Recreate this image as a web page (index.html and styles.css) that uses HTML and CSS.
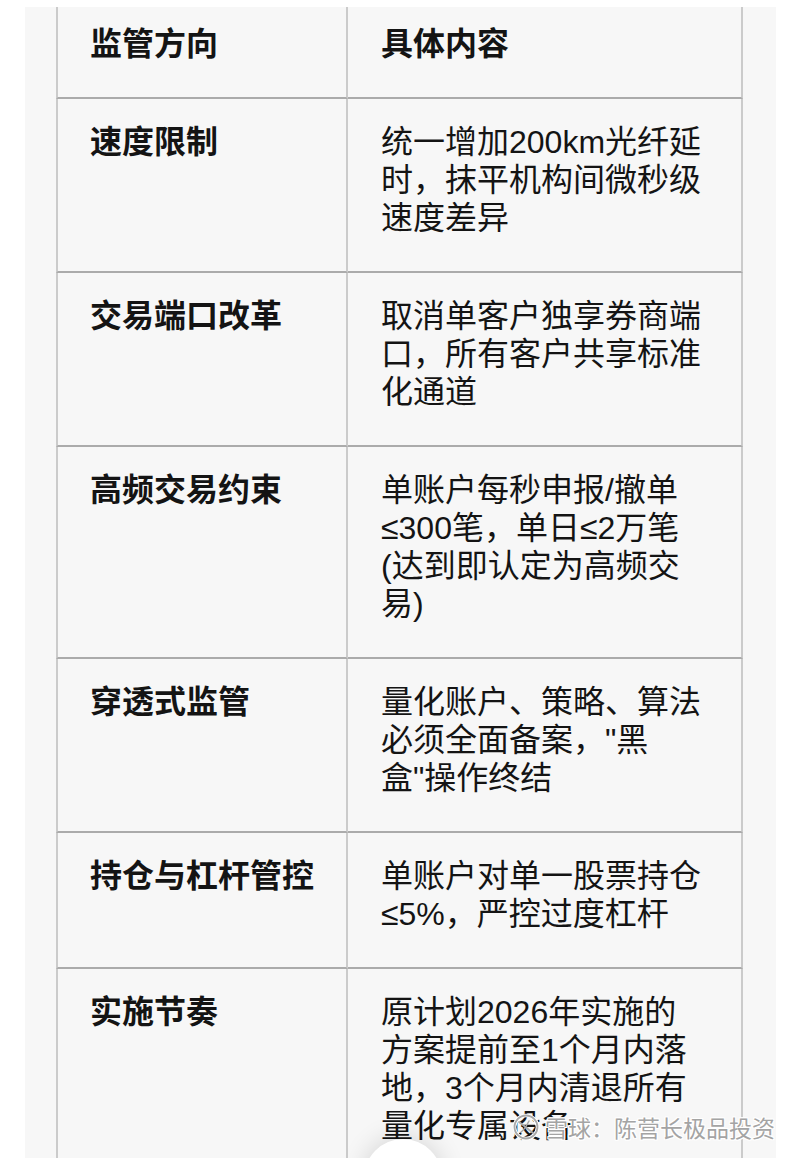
FILE: index.html
```html
<!DOCTYPE html>
<html lang="zh-CN">
<head>
<meta charset="utf-8">
<title>监管方向</title>
<link rel="stylesheet" href="styles.css">
</head>
<body>
<div class="page">
  <div class="panel">
    <div class="grid">
      <div class="cell head key">监管方向</div>
      <div class="cell head val">具体内容</div>

      <div class="cell key">速度限制</div>
      <div class="cell val">统一增加200km光纤延
时，抹平机构间微秒级
速度差异</div>

      <div class="cell key">交易端口改革</div>
      <div class="cell val">取消单客户独享券商端
口，所有客户共享标准
化通道</div>

      <div class="cell key">高频交易约束</div>
      <div class="cell val">单账户每秒申报/撤单
≤300笔，单日≤2万笔
(达到即认定为高频交
易)</div>

      <div class="cell key">穿透式监管</div>
      <div class="cell val">量化账户、策略、算法
必须全面备案，"黑
盒"操作终结</div>

      <div class="cell key">持仓与杠杆管控</div>
      <div class="cell val">单账户对单一股票持仓
≤5%，严控过度杠杆</div>

      <div class="cell key">实施节奏</div>
      <div class="cell val">原计划2026年实施的
方案提前至1个月内落
地，3个月内清退所有
量化专属设备</div>
    </div>
  </div>
  <div class="fab"></div>
  <div class="watermark">
    <svg class="wm-logo" width="28" height="28" viewBox="0 0 28 28">
      <circle cx="14" cy="14" r="11.5" fill="none" stroke="#ffffff" stroke-width="3.6"/>
      <circle cx="14" cy="14" r="11.5" fill="none" stroke="#a8a8a8" stroke-width="1.8"/>
      <path d="M7 9 C 11 12, 15 15, 21 20" fill="none" stroke="#a8a8a8" stroke-width="1.8" stroke-linecap="round"/>
      <path d="M9 19 C 12 17, 14 14, 17 8" fill="none" stroke="#a8a8a8" stroke-width="1.5" stroke-linecap="round"/>
    </svg>
    <span class="wm-text">雪球：陈营长极品投资</span>
  </div>
</div>
</body>
</html>
```

FILE: styles.css
```css
html, body {
  margin: 0;
  padding: 0;
  background: #ffffff;
}

body {
  height: 1158px;
  overflow: hidden;
  font-family: "Liberation Sans", "Noto Sans CJK SC", sans-serif;
  color: #141414;
}

.page {
  position: relative;
  height: 1158px;
  overflow: hidden;
}

.panel {
  margin: 7px 24px 0 25px;
  height: 1151px;
  background: #f7f7f7;
  padding-left: 31px;
  box-sizing: border-box;
}

.grid {
  display: grid;
  grid-template-columns: 292px 395px;
}

.cell {
  box-sizing: border-box;
  font-size: 32px;
  line-height: 38px;
  padding-top: 24px;
  padding-bottom: 34px;
  border-bottom: 2px solid #ababab;
  border-right: 2px solid #cbcbcb;
  white-space: pre-line;
}

.key {
  font-weight: 700;
  padding-left: 32px;
  padding-right: 10px;
  border-left: 2px solid #cbcbcb;
}

.val {
  font-weight: 400;
  padding-left: 33px;
  padding-right: 10px;
}

.head {
  padding-top: 18px;
  padding-bottom: 34px;
  font-weight: 700;
}

.fab {
  position: absolute;
  left: 364px;
  top: 1139px;
  width: 78px;
  height: 78px;
  border-radius: 50%;
  background: #ffffff;
  box-shadow: 0 -2px 26px rgba(0, 0, 0, 0.14);
}

.watermark {
  position: absolute;
  left: 512px;
  top: 1112px;
  display: flex;
  align-items: center;
  gap: 5px;
}

.wm-logo {
  display: block;
}

.wm-text {
  font-family: "Noto Sans CJK SC", sans-serif;
  font-size: 23px;
  line-height: 30px;
  color: #a4a4a4;
  text-shadow: 1px 0 0 #fff, -1px 0 0 #fff, 0 1px 0 #fff, 0 -1px 0 #fff, 1px 1px 0 #fff, -1px -1px 0 #fff, 1px -1px 0 #fff, -1px 1px 0 #fff;
}
```
